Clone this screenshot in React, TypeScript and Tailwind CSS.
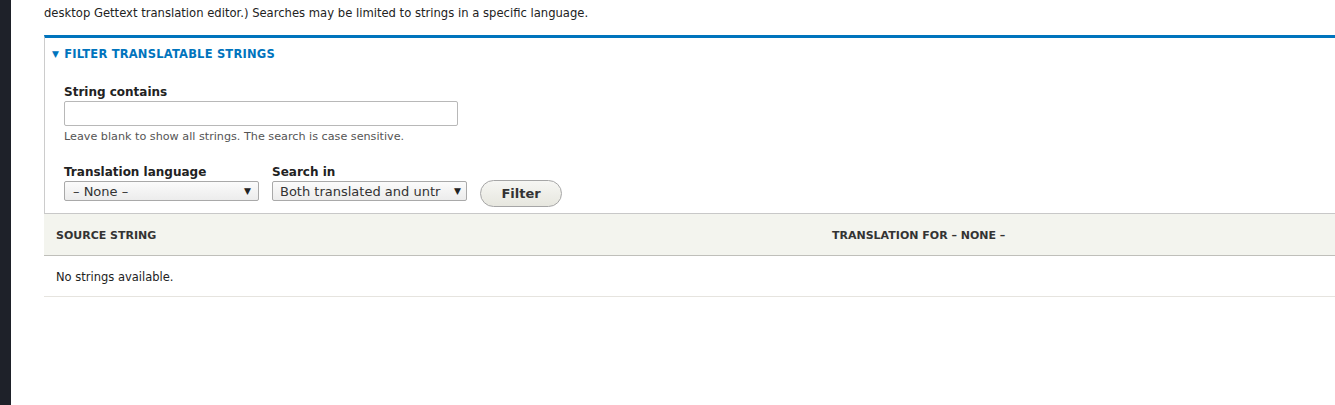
export default function App() {
  return (
    <div className="flex min-h-[405px] w-[1335px] overflow-hidden bg-white font-['DejaVu_Sans',sans-serif] text-[#333]">
      <div className="w-[11px] shrink-0 bg-[#1e2129]" />
      <main className="flex-1 pl-[33px]">
        <p className="pt-[3px] text-[11.6px] leading-[20px] text-[#222]">
          desktop Gettext translation editor.) Searches may be limited to strings in a specific language.
        </p>

        <fieldset className="mt-[12px] border-t-[3px] border-l border-b border-t-[#0074bd] border-l-[#ccc] border-b-[#c8c8c8]">
          <div className="flex items-center gap-[5px] pl-[7px] pt-[8px] text-[11.5px] font-bold tracking-[0.2px] text-[#0074bd]">
            <span className="text-[9px]">▼</span>
            FILTER TRANSLATABLE STRINGS
          </div>

          <div className="pl-[19px] pb-[12px] pt-[22px]">
            <label className="block text-[12px] font-bold leading-[15px] text-[#222]">String contains</label>
            <input className="mt-[1px] block h-[25px] w-[394px] rounded-[2px] border border-[#b8b8b8] bg-white" />
            <div className="mt-[4px] text-[11.2px] leading-[14px] text-[#555]">
              Leave blank to show all strings. The search is case sensitive.
            </div>

            <div className="mt-[21px] flex items-end gap-[13px]">
              <div>
                <label className="block text-[12px] font-bold leading-[15px] text-[#222]">Translation language</label>
                <div className="mt-[1px] flex h-[20px] w-[195px] items-center justify-between rounded-[2px] border border-[#a9a9a9] bg-gradient-to-b from-[#fbfbfb] to-[#ececec] pl-[8px] pr-[7px] text-[13px] text-[#333]">
                  <span>– None –</span>
                  <span className="text-[9px] text-[#222]">▼</span>
                </div>
              </div>
              <div>
                <label className="block text-[12px] font-bold leading-[15px] text-[#222]">Search in</label>
                <div className="mt-[1px] flex h-[20px] w-[195px] items-center justify-between rounded-[2px] border border-[#a9a9a9] bg-gradient-to-b from-[#fbfbfb] to-[#ececec] pl-[7px] pr-[5px] text-[13px] text-[#333]">
                  <span className="w-[168px] overflow-hidden whitespace-nowrap">Both translated and untr</span>
                  <span className="text-[9px] text-[#222]">▼</span>
                </div>
              </div>
              <button className="-mb-[6px] h-[27px] w-[82px] rounded-full border border-[#a6a6a6] bg-gradient-to-b from-[#f6f6f3] to-[#e7e7df] text-[13px] font-bold text-[#333]">
                Filter
              </button>
            </div>
          </div>
        </fieldset>

        <table className="w-full border-collapse text-[11px]">
          <thead>
            <tr className="h-[41px] border-b border-[#bfbfba] bg-[#f3f4ee] text-left text-[#333]">
              <th className="w-[788px] pl-[12px] pt-[3px] font-bold">SOURCE STRING</th>
              <th className="pt-[3px] font-bold">TRANSLATION FOR – NONE –</th>
            </tr>
          </thead>
          <tbody>
            <tr className="h-[41px] border-b border-[#e6e4df]">
              <td colSpan={2} className="pl-[12px] pt-[3px] text-[11.5px] text-[#222]">No strings available.</td>
            </tr>
          </tbody>
        </table>
      </main>
    </div>
  );
}
